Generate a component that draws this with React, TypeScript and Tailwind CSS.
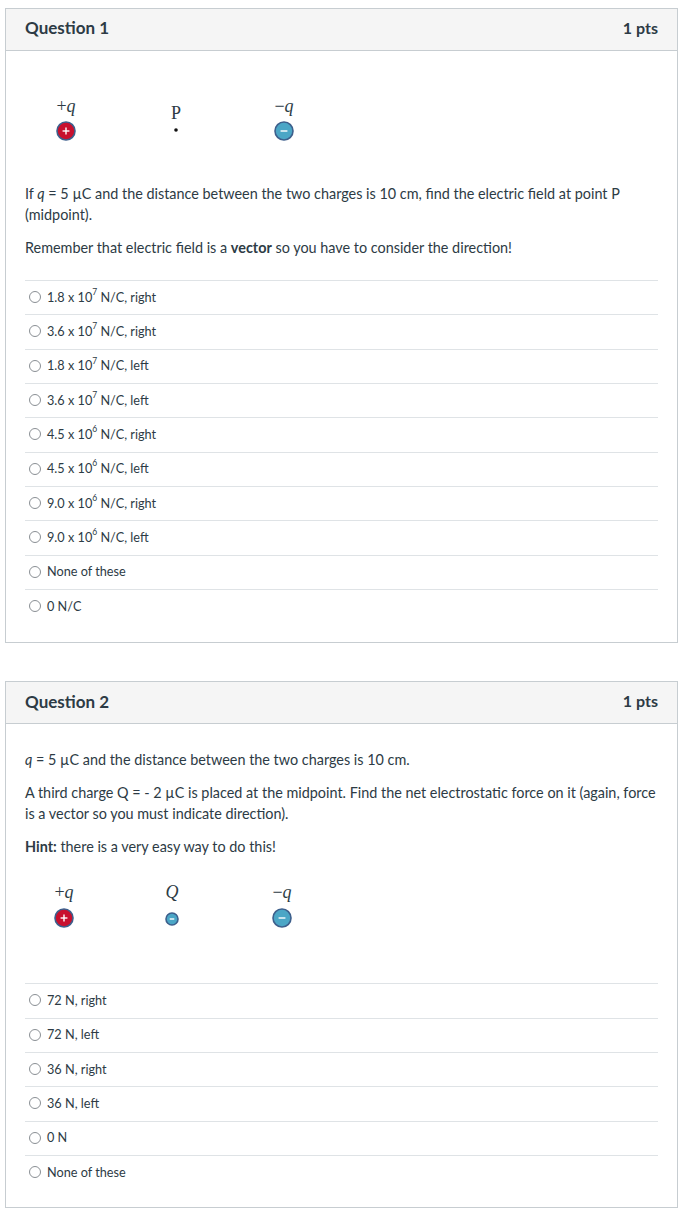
const Q1_ANSWERS: { base: string; exp?: string; rest: string }[] = [
  { base: '1.8 x 10', exp: '7', rest: ' N/C, right' },
  { base: '3.6 x 10', exp: '7', rest: ' N/C, right' },
  { base: '1.8 x 10', exp: '7', rest: ' N/C, left' },
  { base: '3.6 x 10', exp: '7', rest: ' N/C, left' },
  { base: '4.5 x 10', exp: '6', rest: ' N/C, right' },
  { base: '4.5 x 10', exp: '6', rest: ' N/C, left' },
  { base: '9.0 x 10', exp: '6', rest: ' N/C, right' },
  { base: '9.0 x 10', exp: '6', rest: ' N/C, left' },
  { base: 'None of these', rest: '' },
  { base: '0 N/C', rest: '' },
]

const Q2_ANSWERS = ['72 N, right', '72 N, left', '36 N, right', '36 N, left', '0 N', 'None of these']

const mathFont = { fontFamily: '"Liberation Serif", "DejaVu Serif", serif' }

function Charge({ cx, cy, r = 9, sign }: { cx: number; cy: number; r?: number; sign: '+' | '-' }) {
  const fill = sign === '+' ? '#c8102e' : '#4ba6c6'
  const s = r * 0.38
  return (
    <g>
      <circle cx={cx} cy={cy} r={r} fill={fill} stroke="#3d5f8c" strokeWidth={1.6} />
      <line x1={cx - s} y1={cy} x2={cx + s} y2={cy} stroke="#fff" strokeWidth={1.4} />
      {sign === '+' && <line x1={cx} y1={cy - s} x2={cx} y2={cy + s} stroke="#fff" strokeWidth={1.4} />}
    </g>
  )
}

function Radio() {
  return <span className="inline-block w-[12px] h-[12px] rounded-full border border-[#8a8f94] bg-white shrink-0" />
}

function AnswerRow({ children }: { children: React.ReactNode }) {
  return (
    <div className="h-[34.33px] border-t border-[#dfe3e6] flex items-center gap-[6px] pl-[4px] pb-[1px] text-[12.7px] text-[#2d3b45]">
      <Radio />
      <span>{children}</span>
    </div>
  )
}

function Header({ title }: { title: string }) {
  return (
    <div className="h-[42px] bg-[#f5f5f5] border-b border-[#c7cdd1] px-[19px] pb-[3px] flex items-center justify-between">
      <span className="text-[17px] font-bold text-[#2d3b45]">{title}</span>
      <span className="text-[16px] font-bold text-[#2d3b45]">1 pts</span>
    </div>
  )
}

export default function App() {
  return (
    <div className="bg-white min-h-screen pt-[8px] pl-[5px]" style={{ fontFamily: 'Lato, "Liberation Sans", sans-serif' }}>
      {/* Question 1 */}
      <div className="w-[673px] border border-[#c7cdd1]">
        <Header title="Question 1" />
        <div className="px-[19px] pt-[39px] pb-[19px] text-[#2d3b45]">
          <svg width="300" height="60" viewBox="0 0 300 60" className="block -ml-[24px]">
            <g style={mathFont} fontSize="18" fill="#2d3b45" textAnchor="middle">
              <text x={65} y={22}>
                +<tspan fontStyle="italic">q</tspan>
              </text>
              <text x={175} y={29}>P</text>
              <text x={283} y={22}>
                −<tspan fontStyle="italic">q</tspan>
              </text>
            </g>
            <Charge cx={65} cy={41} sign="+" />
            <circle cx={175} cy={40} r={1.8} fill="#111" />
            <Charge cx={283} cy={41} sign="-" />
          </svg>
          <p className="mt-[33px] text-[14.4px] leading-[21px]">
            If <i>q</i> = 5 µC and the distance between the two charges is 10 cm, find the electric field at point P
            (midpoint).
          </p>
          <p className="mt-[12px] text-[14.4px] leading-[21px]">
            Remember that electric field is a <b>vector</b> so you have to consider the direction!
          </p>
          <div className="mt-[22px]">
            {Q1_ANSWERS.map((a, i) => (
              <AnswerRow key={i}>
                {a.base}
                {a.exp && <sup className="text-[8.5px] -top-[0.8em]">{a.exp}</sup>}
                {a.rest}
              </AnswerRow>
            ))}
          </div>
        </div>
      </div>

      {/* Question 2 */}
      <div className="w-[673px] border border-[#c7cdd1] mt-[38px]">
        <Header title="Question 2" />
        <div className="px-[19px] pt-[25px] pb-[18px] text-[#2d3b45]">
          <p className="text-[14.4px] leading-[21px]">
            <i>q</i> = 5 µC and the distance between the two charges is 10 cm.
          </p>
          <p className="mt-[12px] text-[14.4px] leading-[21px]">
            A third charge Q = - 2 µC is placed at the midpoint. Find the net electrostatic force on it (again, force
            is a vector so you must indicate direction).
          </p>
          <p className="mt-[12px] text-[14.4px] leading-[21px]">
            <b>Hint:</b> there is a very easy way to do this!
          </p>
          <svg width="300" height="70" viewBox="0 0 300 70" className="block mt-[13px] -ml-[24px]">
            <g style={mathFont} fontSize="18" fill="#2d3b45" textAnchor="middle">
              <text x={63} y={28}>
                +<tspan fontStyle="italic">q</tspan>
              </text>
              <text x={171} y={28} fontStyle="italic">
                Q
              </text>
              <text x={281} y={28}>
                −<tspan fontStyle="italic">q</tspan>
              </text>
            </g>
            <Charge cx={63} cy={48} sign="+" />
            <Charge cx={171} cy={49} r={6} sign="-" />
            <Charge cx={281} cy={48} sign="-" />
          </svg>
          <div className="mt-[43px]">
            {Q2_ANSWERS.map((a) => (
              <AnswerRow key={a}>{a}</AnswerRow>
            ))}
          </div>
        </div>
      </div>
    </div>
  )
}
